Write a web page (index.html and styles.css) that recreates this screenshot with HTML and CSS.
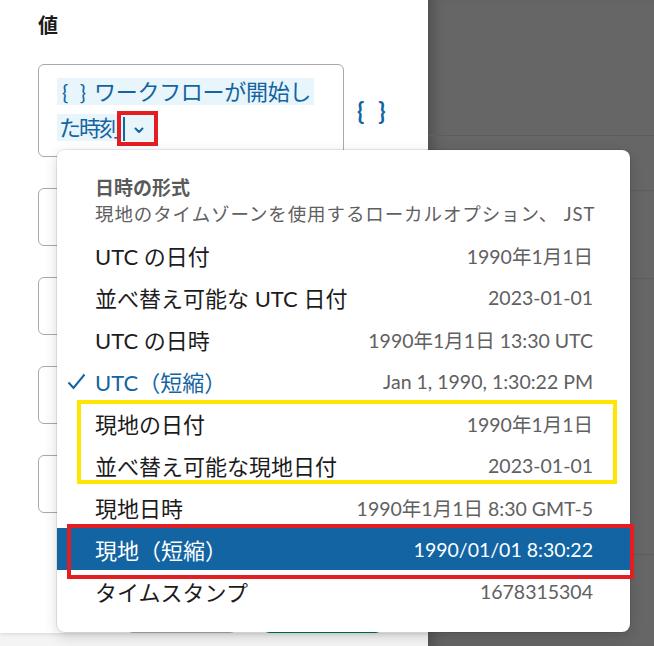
FILE: index.html
```html
<!DOCTYPE html>
<html lang="ja">
<head>
<meta charset="utf-8">
<link rel="stylesheet" href="styles.css">
</head>
<body>
<div class="page">
  <div class="left">
    <div class="modal">
      <div class="label">値</div>
      <div class="fields">
        <div class="field-row">
          <div class="input input-main">
            <span class="chip"><span class="brace">{ }</span><span class="line1">ワークフローが開始し</span><br><span class="tight">た時刻</span><span class="caret"></span><svg class="chev" width="10" height="7" viewBox="0 0 10 7"><path d="M1.5 1.5 L5 5 L8.5 1.5" fill="none" stroke="#1264a3" stroke-width="2" stroke-linecap="round" stroke-linejoin="round"/></svg></span>
          </div>
          <span class="brace-btn">{ }</span>
        </div>
        <div class="field-row"><div class="input"></div></div>
        <div class="field-row"><div class="input"></div></div>
        <div class="field-row"><div class="input"></div></div>
        <div class="field-row"><div class="input"></div></div>
      </div>
      <div class="buttons">
        <span class="btn btn-out"></span>
        <span class="btn btn-green"></span>
      </div>
    </div>
  </div>
  <div class="overlay">
    <div class="ov-seg seg1"></div>
    <div class="ov-seg seg2"></div>
    <div class="ov-seg seg3"></div>
    <div class="ov-seg seg4"></div>
  </div>

  <div class="menu">
    <div class="menu-head">
      <div class="menu-title">日時の形式</div>
      <div class="menu-sub">現地のタイムゾーンを使用するローカルオプション、 JST</div>
    </div>
    <div class="row"><span class="lbl">UTC の日付</span><span class="val">1990年1月1日</span></div>
    <div class="row"><span class="lbl">並べ替え可能な UTC 日付</span><span class="val">2023-01-01</span></div>
    <div class="row"><span class="lbl">UTC の日時</span><span class="val">1990年1月1日 13:30 UTC</span></div>
    <div class="row checked"><svg class="check" width="19" height="17" viewBox="0 0 19 17"><polyline points="1.5,9.5 6.5,15 17.5,1.5" fill="none" stroke="#1264a3" stroke-width="2"/></svg><span class="lbl">UTC（短縮）</span><span class="val">Jan 1, 1990, 1:30:22 PM</span></div>
    <div class="row"><span class="lbl">現地の日付</span><span class="val">1990年1月1日</span></div>
    <div class="row"><span class="lbl">並べ替え可能な現地日付</span><span class="val">2023-01-01</span></div>
    <div class="row"><span class="lbl">現地日時</span><span class="val">1990年1月1日 8:30 GMT-5</span></div>
    <div class="row active"><span class="lbl">現地（短縮）</span><span class="val">1990/01/01 8:30:22</span></div>
    <div class="row"><span class="lbl">タイムスタンプ</span><span class="val">1678315304</span></div>
  </div>

  <div class="mark mark-chev"></div>
  <div class="mark mark-yellow"></div>
  <div class="mark mark-red"></div>
</div>
</body>
</html>
```
FILE: styles.css
```css
* { box-sizing: border-box; }
html, body { margin: 0; padding: 0; }
body {
  font-family: Lato, "Noto Sans CJK JP", sans-serif;
  color: #1d1c1d;
  background: #ececec;
}
.page {
  position: relative;
  width: 654px;
  height: 646px;
  overflow: hidden;
  display: flex;
}
.left {
  width: 428px;
  height: 646px;
  background: linear-gradient(#dcdcdc, #f2f2f2 8px, #f4f4f4);
  background-color: #f1f1f1;
}
.modal {
  height: 633px;
  background: #fff;
  padding: 11px 0 0 38px;
  box-shadow: 0 1px 4px rgba(0,0,0,0.12);
}
.label {
  font-size: 20px;
  font-weight: bold;
  line-height: 28px;
}
.fields {
  margin-top: 25px;
  display: flex;
  flex-direction: column;
  gap: 31px;
}
.field-row {
  display: flex;
  align-items: center;
  gap: 13px;
}
.input {
  width: 306px;
  height: 58px;
  border: 1px solid #a9a9a9;
  border-radius: 6px;
  background: #fff;
}
.input-main {
  height: 93px;
  padding: 9px 18px 0 18px;
  font-size: 22px;
  line-height: 36px;
  color: #1264a3;
}
.chip {
  background: #e8f5fa;
  padding: 0 3px 0 2px;
  -webkit-box-decoration-break: clone;
  box-decoration-break: clone;
}
.line1 { letter-spacing: -0.3px; }
.tight { letter-spacing: -2px; }
.brace {
  word-spacing: 6px;
  margin-right: 8px;
  margin-left: 3px;
  font-size: 21px;
}
.caret {
  display: inline-block;
  width: 1.5px;
  height: 24px;
  background: #1264a3;
  vertical-align: -5px;
  margin-left: 4px;
}
.chev {
  margin: 0 10px 0 9px;
  vertical-align: 2px;
}
.brace-btn {
  font-size: 24px;
  color: #1264a3;
  font-weight: bold;
  word-spacing: 8px;
  line-height: 30px;
}
.buttons {
  margin-top: 84px;
  display: flex;
  gap: 24px;
  padding-left: 87px;
}
.btn {
  display: block;
  height: 36px;
  border-radius: 8px;
}
.btn-out {
  width: 113px;
  border: 1px solid #b5b5b5;
  background: #fff;
}
.btn-green {
  width: 121px;
  background: #007a5a;
}
.overlay {
  flex: 1;
  background: #666;
  box-shadow: inset 14px 0 14px -10px rgba(0,0,0,0.25);
}
.ov-seg { border-bottom: 1px solid #5d5d5d; }
.seg1 { height: 136px; }
.seg2 { height: 55px; }
.seg3 { height: 88px; }
.seg4 { height: 276px; }

.menu {
  position: absolute;
  left: 57px;
  top: 150px;
  width: 573px;
  height: 482px;
  background: #fff;
  border-radius: 8px;
  box-shadow: 0 0 0 1px rgba(0,0,0,0.08), 0 4px 14px rgba(0,0,0,0.16);
  padding: 25px 0 21px;
}
.menu-head {
  padding: 0 37px 0 38px;
  color: #616061;
  margin-bottom: 7px;
}
.menu-title {
  font-size: 19px;
  font-weight: bold;
  line-height: 26px;
  color: #5b5a5b;
}
.menu-sub {
  font-size: 18.5px;
  letter-spacing: 0.9px;
  line-height: 26px;
  white-space: nowrap;
}
.row {
  position: relative;
  display: flex;
  justify-content: space-between;
  align-items: center;
  height: 42px;
  padding: 0 37px 0 38px;
}
.lbl {
  font-size: 22px;
  color: #1d1c1d;
  white-space: nowrap;
}
.val {
  font-size: 19.5px;
  color: #616061;
  white-space: nowrap;
}
.checked .lbl { color: #1264a3; }
.check {
  position: absolute;
  left: 10px;
  top: 13px;
}
.active {
  background: #1264a3;
}
.active .lbl, .active .val { color: #fff; }

.mark {
  position: absolute;
  border: 4px solid #e41e20;
}
.mark-chev {
  left: 117px;
  top: 111px;
  width: 41px;
  height: 35px;
}
.mark-yellow {
  border-color: #ffe500;
  left: 77px;
  top: 400px;
  width: 540px;
  height: 84px;
}
.mark-red {
  left: 67px;
  top: 524px;
  width: 567px;
  height: 55px;
}
```
